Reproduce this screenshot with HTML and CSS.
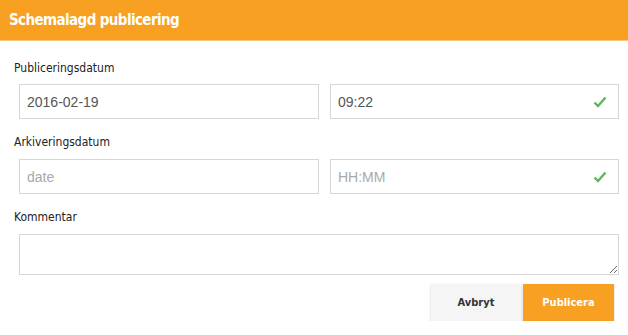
FILE: index.html
```html
<!DOCTYPE html>
<html lang="sv">
  <head>
    <meta charset="utf-8">
    <meta name="viewport" content="width=device-width, initial-scale=1.0">
    <title>Schemalagd publicering</title>
    <link rel="stylesheet" href="styles.css">
  </head>
  <body>
    <!-- rubrik -->
    <div class="modal-header">
      <h1 class="modal-title">Schemalagd publicering</h1>
    </div>

    <div class="modal-body">
      <div class="form-group">
        <label class="control-label">Publiceringsdatum</label>
        <div class="row">
          <input class="form-control col-date" type="text" value="2016-02-19">
          <div class="col-time has-success">
            <input class="form-control" type="text" value="09:22">
            <svg class="check" width="14" height="12" viewBox="0 0 14 12"><path d="M1.5 6.5 L5 10 L12.5 1.5" fill="none" stroke="#5cb85c" stroke-width="2.4"/></svg>
          </div>
        </div>
      </div>

      <div class="form-group">
        <label class="control-label">Arkiveringsdatum</label>
        <div class="row">
          <input class="form-control col-date" type="text" placeholder="date">
          <div class="col-time has-success">
            <input class="form-control" type="text" placeholder="HH:MM">
            <svg class="check" width="14" height="12" viewBox="0 0 14 12"><path d="M1.5 6.5 L5 10 L12.5 1.5" fill="none" stroke="#5cb85c" stroke-width="2.4"/></svg>
          </div>
        </div>
      </div>

      <div class="form-group">
        <label class="control-label">Kommentar</label>
        <textarea class="form-control comment"></textarea>
      </div>
    </div>

    <div class="modal-footer">
      <button class="btn btn-default" type="button">Avbryt</button>
      <button class="btn btn-primary" type="button">Publicera</button>
    </div>
  </body>
</html>
```

FILE: styles.css
```css
* {
  box-sizing: border-box;
}
html, body {
  margin: 0;
  padding: 0;
  background-color: #fff;
  font-family: "DejaVu Sans Condensed", "DejaVu Sans", sans-serif;
}

/* rubrik */
.modal-header {
  height: 41px;
  background-color: #f7a021;
  border-bottom: 1px solid #fbc57a;
  padding: 0 9px;
  display: flex;
  align-items: center;
}
.modal-title {
  margin: 0;
  color: #fff;
  font-size: 15px;
  font-weight: bold;
  letter-spacing: -0.6px;
}

.modal-body {
  padding: 19px 9px 0 14px;
}
.form-group {
  margin-bottom: 15px;
}
.control-label {
  display: block;
  font-size: 12px;
  line-height: 16px;
  color: #222;
  margin-bottom: 9px;
}
.form-group:first-child .control-label {
  margin-bottom: 8px;
}
.row {
  display: flex;
  gap: 11px;
  padding-left: 5px;
}
.col-date {
  width: 300px;
}
.col-time {
  width: 289px;
  position: relative;
}
.form-control {
  display: block;
  height: 35px;
  padding: 0 7px;
  border: 1px solid #d6d6d6;
  border-radius: 0;
  font-family: "Liberation Sans", Arial, sans-serif;
  font-size: 14px;
  color: #555;
  background: #fff;
  outline: none;
}
.col-time .form-control {
  width: 100%;
}
.form-control::placeholder {
  color: #a9a9a9;
}
.check {
  position: absolute;
  right: 12px;
  top: 12px;
}
.comment {
  margin-left: 5px;
  width: 600px;
  height: 41px;
  resize: both;
  padding: 6px 7px;
}

.modal-footer {
  display: flex;
  justify-content: flex-end;
  gap: 2px;
  padding: 0 14px 0 0;
  margin-top: -6px;
}
.btn {
  height: 37px;
  border: 0;
  border-radius: 0;
  font-family: "DejaVu Sans Condensed", "DejaVu Sans", sans-serif;
  font-size: 11px;
  font-weight: bold;
  box-shadow: 0 1px 2px rgba(0, 0, 0, 0.22);
}
.btn-default {
  width: 90px;
  background-color: #f5f5f5;
  color: #333;
}
.btn-primary {
  width: 91px;
  background-color: #f7a021;
  color: #fff;
}
```
